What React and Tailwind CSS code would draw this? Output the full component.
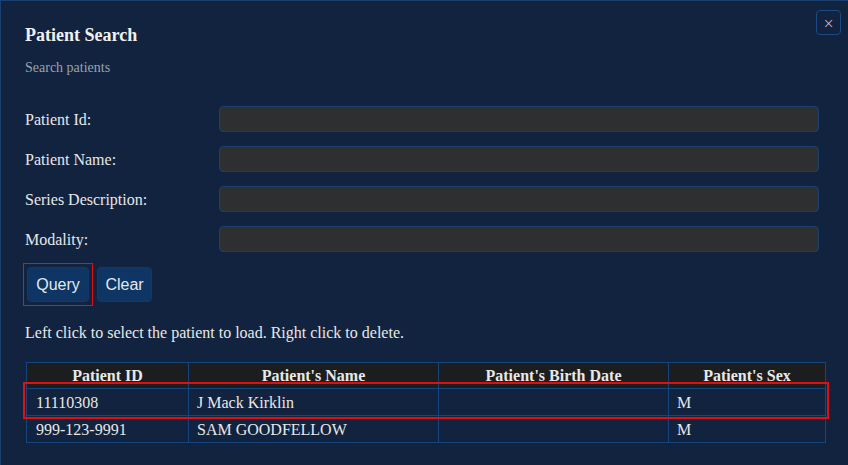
import React from "react";

const fields = ["Patient Id:", "Patient Name:", "Series Description:", "Modality:"];

const columns = [
  { name: "Patient ID", width: "w-[162px]" },
  { name: "Patient's Name", width: "w-[250px]" },
  { name: "Patient's Birth Date", width: "w-[230px]" },
  { name: "Patient's Sex", width: "w-[157px]" },
];

const patients = [
  { id: "11110308", name: "J Mack Kirklin", birth: "", sex: "M" },
  { id: "999-123-9991", name: "SAM GOODFELLOW", birth: "", sex: "M" },
];

export default function App() {
  return (
    <div className="relative w-[848px] h-[465px] overflow-hidden bg-[#11233e] border-l border-t border-[#1b3f70] text-[#e8e8e8] font-['Liberation_Serif',serif]">
      <button className="absolute top-[9px] right-[7px] w-[25px] h-[25px] flex items-center justify-center rounded border border-[#1c4a85] text-[14px] leading-none text-[#d0d6de] font-['DejaVu_Sans',sans-serif] font-light">
        ×
      </button>

      <div className="px-[24px] pt-[22px]">
        <h2 className="text-[18px] leading-6 font-bold text-[#f0f0f0]">Patient Search</h2>
        <p className="mt-[11px] text-[14px] leading-5 text-[#9aa3ae]">Search patients</p>

        <div className="mt-[28px] grid grid-cols-[194px_600px] gap-y-[14px]">
          {fields.map((f) => (
            <React.Fragment key={f}>
              <label className="h-[26px] pt-px text-[16px] leading-[26px]">{f}</label>
              <input className="h-[26px] rounded border border-[#1d3f6e] bg-[#2d2f31] outline-none" />
            </React.Fragment>
          ))}
        </div>

        <div className="mt-[11px] -ml-[2px] flex items-center gap-[4px] font-['Liberation_Sans',sans-serif] text-[16px]">
          <div className="p-[3px] border border-[#e01010]">
            <button className="h-[35px] w-[62px] rounded border border-[#12396a] bg-[#0e3563] text-[#e4e8ee]">
              Query
            </button>
          </div>
          <button className="h-[35px] w-[55px] rounded border border-[#12396a] bg-[#0e3563] text-[#e4e8ee]">
            Clear
          </button>
        </div>

        <p className="mt-[15px] text-[16px] leading-6">
          Left click to select the patient to load. Right click to delete.
        </p>

        <div className="relative mt-[17px] ml-px">
          <table className="w-[800px] border-collapse text-[16px] leading-[24px] table-fixed">
            <thead>
              <tr className="bg-[#1b1d1e]">
                {columns.map((c) => (
                  <th key={c.name} className={`${c.width} h-[26px] border border-[#15457f] font-bold text-center px-2 pt-px leading-[24px]`}>
                    {c.name}
                  </th>
                ))}
              </tr>
            </thead>
            <tbody>
              {patients.map((p) => (
                <tr key={p.id} className="h-[27px]">
                  <td className="border border-[#15457f] px-2 pl-[9px] pt-[2px]">{p.id}</td>
                  <td className="border border-[#15457f] px-2 pt-[2px]">{p.name}</td>
                  <td className="border border-[#15457f] px-2 pt-[2px]">{p.birth}</td>
                  <td className="border border-[#15457f] px-2 pt-[2px]">{p.sex}</td>
                </tr>
              ))}
            </tbody>
          </table>
          <div className="absolute left-[-3px] top-[20px] w-[806px] h-[37px] border-2 border-[#e01010] pointer-events-none" />
        </div>
      </div>
    </div>
  );
}
